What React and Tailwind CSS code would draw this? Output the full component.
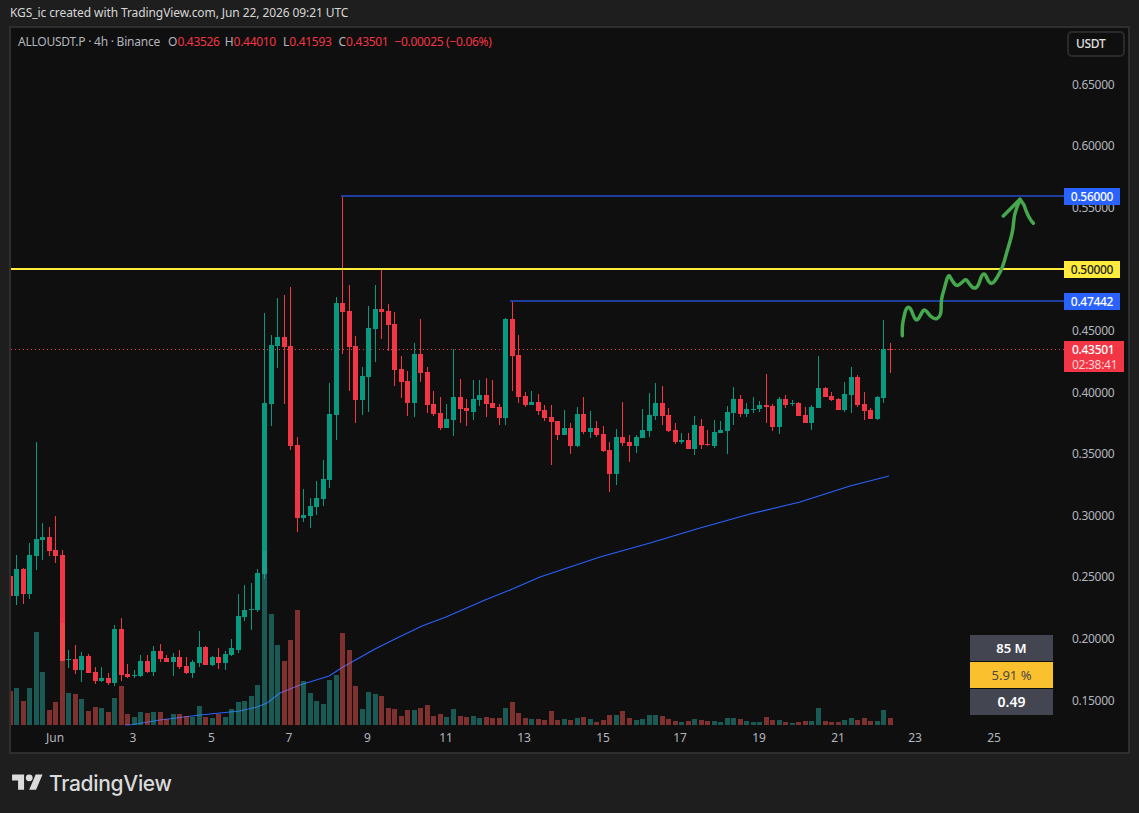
const G = "#089981";
const R = "#f23645";
// [up, bodyTop, bodyBottom, wickTop, wickBottom, volumeTop]
const bars = [
[0,576,596,568,605,691],[1,569,596,555,605,688],[0,569,594,568,604,701],[1,555,594,543,599,688],[1,539,556,442,570,632],[1,537,540,523,560,672],
[0,537,551,527,556,710],[0,550,556,516,563,702],[0,555,661,550,661,623],[1,659,660,650,668,693],[0,659,670,645,674,694],[1,656,670,652,682,699],
[0,656,673,654,673,711],[0,672,681,667,684,707],[1,678,681,667,682,708],[0,678,683,673,685,712],[1,629,683,625,686,698],[0,629,675,618,681,686],
[0,674,677,664,678,714],[1,675,676,670,678,717],[1,661,676,655,677,712],[0,661,672,655,673,713],[1,651,672,646,676,712],[0,651,659,644,662,712],
[0,658,662,655,662,719],[1,657,662,653,676,714],[0,657,667,650,669,714],[0,666,673,657,674,716],[1,662,673,660,678,717],[1,647,663,631,667,706],
[0,647,665,646,665,717],[1,657,665,656,666,718],[0,657,663,648,669,714],[1,654,663,651,670,717],[1,648,655,639,656,709],[1,616,650,594,653,702],
[1,610,617,585,621,701],[1,609,610,583,630,696],[1,573,610,569,612,685],[1,403,574,313,579,551],[1,345,404,335,426,614],[1,337,346,298,368,645],
[0,337,347,295,404,661],[0,346,446,287,450,640],[0,445,518,437,532,610],[1,515,518,489,522,681],[1,506,516,498,528,693],[1,498,507,481,515,701],
[1,479,499,460,506,704],[1,414,480,383,488,680],[1,303,415,297,440,675],[0,303,312,196,354,633],[0,311,347,285,391,650],[0,346,400,336,423,686],
[1,376,400,367,415,709],[1,328,377,306,412,692],[1,309,329,285,362,694],[0,309,312,268,339,696],[0,311,325,304,351,708],[0,324,370,312,386,709],
[0,369,382,356,398,716],[0,381,403,371,416,710],[1,354,403,343,417,710],[0,354,373,319,382,708],[0,372,405,367,413,705],[0,404,414,391,416,716],
[0,413,428,397,430,714],[1,419,428,404,428,717],[1,397,420,349,436,709],[0,397,409,379,423,716],[0,408,411,399,426,717],[1,399,412,380,420,716],
[1,395,400,380,406,718],[0,395,404,378,417,717],[0,403,408,380,408,718],[0,407,418,404,425,718],[1,319,418,318,425,708],[0,319,356,301,391,702],
[0,355,397,335,403,713],[0,396,405,392,407,718],[1,402,405,391,405,719],[0,402,411,394,415,719],[0,410,418,405,421,720],[0,417,422,405,465,711],
[0,421,435,421,440,720],[1,428,435,410,435,719],[0,428,446,423,454,720],[1,414,446,407,447,718],[0,414,432,397,434,717],[1,428,432,411,438,719],
[0,428,435,421,437,722],[0,434,451,426,452,720],[0,450,474,442,492,715],[1,437,474,429,485,715],[0,437,443,402,446,711],[0,442,446,435,462,718],
[1,437,446,435,453,720],[1,430,438,409,438,719],[1,415,431,393,437,715],[1,403,416,383,420,715],[0,403,416,386,425,716],[0,415,431,408,432,719],
[0,430,442,423,444,721],[1,440,442,433,444,722],[0,440,449,433,449,721],[1,425,449,416,455,719],[0,426,445,419,449,720],[0,444,445,430,446,721],
[1,432,446,420,448,721],[1,430,433,421,433,722],[1,412,431,406,454,718],[1,399,413,387,425,718],[0,399,414,395,417,719],[1,409,414,403,417,721],
[1,409,410,397,413,722],[1,405,409,401,412,722],[0,405,407,374,423,717],[0,406,427,404,431,720],[1,399,427,397,434,720],[0,399,405,395,408,722],
[1,403,404,400,406,723],[0,403,416,402,416,722],[0,415,423,407,423,721],[1,407,423,405,430,721],[1,388,408,356,408,708],[0,388,397,387,397,721],
[0,396,400,392,401,722],[0,399,410,398,410,722],[1,394,410,382,412,720],[1,377,395,367,413,718],[0,377,405,375,407,720],[0,404,411,392,420,718],
[0,410,419,408,419,721],[1,397,419,396,420,721],[1,349,398,320,403,710],[0,349,350,343,373,718],
];
const barX = (i) => 16.3 + 6.518 * (i - 1);

const ma = "125,725 133,724.5 160,720 200,715 240,711 257,707 267,703 280,693 300,685 329,676 343,667 359,658 375,649 395,639 422,626 446,617 485,600 510,590 540,577 600,557 650,543 700,528 750,514 800,502 850,486 889,476";

const sketchPts = [[67,467],[66,440],[72,410],[78,385],[88,380],[96,395],[103,415],[112,422],[122,405],[131,388],[140,393],[150,408],[165,418],[178,412],[184,395],[183,360],[192,330],[205,280],[215,300],[230,320],[245,308],[258,296],[268,312],[282,327],[295,318],[305,285],[315,280],[325,305],[337,313],[350,295],[368,262],[378,225],[390,185],[400,145],[402,105],[420,58]]
  .map(([x, y]) => [880 + x / 3, 180 + y / 3]);
const smooth = (pts) => {
  let d = `M${pts[0][0]} ${pts[0][1]}`;
  for (let i = 1; i < pts.length - 1; i++) {
    const mx = (pts[i][0] + pts[i + 1][0]) / 2;
    const my = (pts[i][1] + pts[i + 1][1]) / 2;
    d += ` Q${pts[i][0]} ${pts[i][1]} ${mx} ${my}`;
  }
  const last = pts[pts.length - 1];
  return d + ` L${last[0]} ${last[1]}`;
};
const sketch = smooth(sketchPts);
const head = `M${880 + 370 / 3} ${180 + 108 / 3} L${880 + 420 / 3} ${180 + 58 / 3} L${880 + 432 / 3} ${180 + 75 / 3} Q${880 + 445 / 3} ${180 + 115 / 3} ${880 + 460 / 3} ${180 + 130 / 3}`;

const prices = [["0.65000",85],["0.60000",146],["0.55000",208],["0.45000",331],["0.40000",393],["0.35000",454],["0.30000",516],["0.25000",577],["0.20000",639],["0.15000",701]];
const dates = [["Jun",55],["3",133],["5",211.5],["7",289],["9",367.5],["11",446],["13",524],["15",603],["17",680],["19",759],["21",838],["23",915],["25",994]];
const font = { fontFamily: '"Noto Sans", sans-serif' };

function Plot() {
  return (
    <svg className="absolute inset-0" width="1117" height="724" viewBox="11 28 1117 724">
      <line x1="11" x2="1064" y1="349.5" y2="349.5" stroke={R} strokeWidth="1" strokeDasharray="1 3" />
      {bars.map((b, i) => {
        const x = barX(i);
        const c = b[0] ? G : R;
        return (
          <g key={i} fill={c}>
            <rect x={Math.round(x)} y={b[3]} width="1" height={b[4] - b[3]} />
            <rect x={Math.round(x) - 2} y={b[1]} width="5" height={Math.max(1, b[2] - b[1])} />
          </g>
        );
      })}
      <polyline points={ma} fill="none" stroke="#2962ff" strokeWidth="1.1" strokeLinejoin="round" />
      {bars.map((b, i) => (
        <rect key={i} x={Math.round(barX(i)) - 2} y={b[5]} width="5" height={725 - b[5]} fill={b[0] ? "#26a69a" : "#ef5350"} fillOpacity="0.5" />
      ))}
      <line x1="341" x2="1064" y1="196" y2="196" stroke="#1f3d9c" strokeWidth="2" />
      <line x1="510" x2="1064" y1="301" y2="301" stroke="#1f3d9c" strokeWidth="2" />
      <line x1="11" x2="1064" y1="269" y2="269" stroke="#ffeb3b" strokeWidth="2" />
      <path d={sketch} fill="none" stroke="#46a84c" strokeWidth="3.5" strokeLinecap="round" strokeLinejoin="round" />
      <path d={head} fill="none" stroke="#46a84c" strokeWidth="3.5" strokeLinecap="round" strokeLinejoin="round" />
    </svg>
  );
}

function Tag({ top, color, text, children }) {
  return (
    <div className={`absolute left-[1053px] flex h-[17px] w-[56px] items-center justify-center text-[12px] font-medium leading-none tracking-[-0.3px] ${text}`} style={{ top: top - 28, backgroundColor: color }}>
      {children}
    </div>
  );
}

export default function App() {
  return (
    <div className="flex h-[813px] w-[1139px] flex-col overflow-hidden bg-[#1e1e1e] text-[#d1d4dc]" style={font}>
      <div className="flex h-[26px] items-center pl-[10px] text-[12px] leading-none tracking-[-0.09px] text-[#d6d6d6]">
        KGS_ic created with TradingView.com, Jun 22, 2026 09:21 UTC
      </div>
      <div className="relative mx-[9px] h-[728px] w-[1121px] border-2 border-[#2e2e2e] bg-[#0f0f0f]">
        <Plot />
        <div className="absolute left-[7px] top-[8px] flex text-[12px] leading-[12px] whitespace-nowrap text-[#b2b5be]">
          <span className="tracking-[-0.23px]">ALLOUSDT.P · 4h · Binance</span>
          <span className="ml-[8px]">O<span className="tracking-[-0.3px] text-[#f23645]">0.43526</span></span>
          <span className="ml-[5px]">H<span className="tracking-[-0.3px] text-[#f23645]">0.44010</span></span>
          <span className="ml-[7px]">L<span className="tracking-[-0.3px] text-[#f23645]">0.41593</span></span>
          <span className="ml-[7px]">C<span className="tracking-[-0.3px] text-[#f23645]">0.43501</span></span>
          <span className="ml-[6px] tracking-[-0.3px] text-[#f23645]">−0.00025 (−0.06%)</span>
        </div>
        <div className="absolute left-[1056px] top-[3px] flex h-[26px] w-[58px] items-center rounded-[5px] border-2 border-[#2a2a2a] pl-[7px] text-[12px] font-medium tracking-[-0.3px] text-[#e0e0e0]">
          USDT
        </div>
        {prices.map(([p, y]) => (
          <div key={p} className="absolute left-[1061px] text-[12px] leading-[14px] tracking-[-0.3px] text-[#b2b5be]" style={{ top: y - 35 }}>{p}</div>
        ))}
        {dates.map(([d, x]) => (
          <div key={d} className="absolute w-[40px] -translate-x-1/2 text-center text-[12px] leading-[14px] text-[#b2b5be]" style={{ left: x - 11, top: 703 }}>{d}</div>
        ))}
        <Tag top={188} color="#2962ff" text="text-white">0.56000</Tag>
        <Tag top={261} color="#ffeb3b" text="text-[#222222]">0.50000</Tag>
        <Tag top={293} color="#2962ff" text="text-white">0.47442</Tag>
        <div className="absolute left-[1053px] top-[313px] flex h-[31px] w-[60px] flex-col justify-center bg-[#f23645] pl-[8px] text-[12px] font-medium leading-[15px] tracking-[-0.3px] text-white">
          <span>0.43501</span>
          <span className="font-normal text-[#fbd0d4]">02:38:41</span>
        </div>
        <div className="absolute left-[959px] top-[607px] flex w-[83px] flex-col gap-px text-center text-[13px] leading-[26px]">
          <div className="h-[26px] bg-[#434651] font-semibold text-white">85 M</div>
          <div className="h-[26px] bg-[#fbc02d] text-[#4a4a4a]">5.91 %</div>
          <div className="h-[26px] bg-[#434651] text-[14px] font-semibold text-white">0.49</div>
        </div>
      </div>
      <div className="flex flex-1 items-center gap-[6px] pb-[1px] pl-[12px] text-[#dbdbdb]">
        <svg width="31" height="24" viewBox="0 0 36 28" fill="currentColor" className="mt-[-1px]">
          <path d="M14 22H7V11H0V4h14v18zM28 22h-8l7.5-18h8L28 22z" />
          <circle cx="20" cy="8" r="4" />
        </svg>
        <span className="text-[21px] font-medium leading-none tracking-[-0.3px]" style={{ fontFamily: "Inter, sans-serif" }}>TradingView</span>
      </div>
    </div>
  );
}
